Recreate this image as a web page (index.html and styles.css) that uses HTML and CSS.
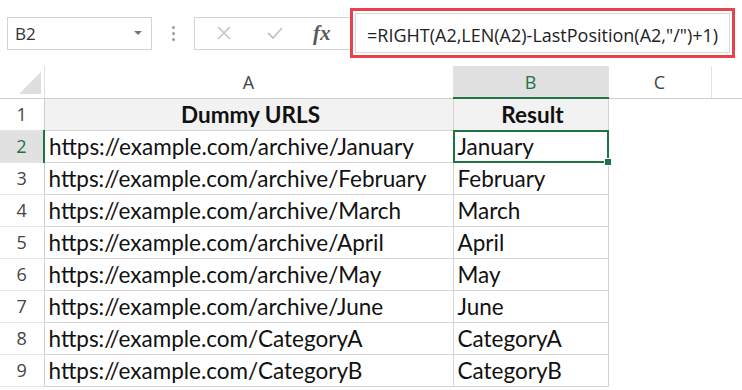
FILE: index.html
```html
<!DOCTYPE html>
<html lang="en">

<head>
    <meta charset="UTF-8">
    <meta name="viewport" content="width=device-width, initial-scale=1.0">
    <title>LastPosition formula</title>
    <link rel="stylesheet" href="styles.css">
</head>

<body>

    <div class="formula-bar">
        <div class="name-box">
            <span>B2</span>
            <span class="caret"></span>
        </div>
        <div class="grip"><i></i><i></i><i></i></div>
        <div class="fx-box">
            <svg class="icon" width="16" height="16" viewBox="0 0 16 16">
                <path d="M2 2 L14 14 M14 2 L2 14" stroke="#c4c4c4" stroke-width="1.6" fill="none" />
            </svg>
            <svg class="icon" width="18" height="16" viewBox="0 0 18 16">
                <path d="M2 8 L7 13 L16 3" stroke="#c4c4c4" stroke-width="1.8" fill="none" />
            </svg>
            <span class="fx">fx</span>
        </div>
        <div class="highlight">
            <div class="formula">=RIGHT(A2,LEN(A2)-LastPosition(A2,"/")+1)</div>
        </div>
    </div>

    <table class="sheet">
        <colgroup>
            <col class="col-head">
            <col class="col-a">
            <col class="col-b">
            <col class="col-c">
            <col>
        </colgroup>
        <tr class="letters">
            <th class="corner"><span class="tri"></span></th>
            <th>A</th>
            <th class="sel">B</th>
            <th>C</th>
            <th class="rest"></th>
        </tr>
        <tr class="title-row">
            <th class="num">1</th>
            <td class="cell title">Dummy URLS</td>
            <td class="cell title">Result</td>
            <td></td><td></td>
        </tr>
        <tr>
            <th class="num sel">2</th>
            <td class="cell">https://example.com/archive/January</td>
            <td class="cell active">January</td>
            <td></td><td></td>
        </tr>
        <tr>
            <th class="num">3</th>
            <td class="cell">https://example.com/archive/February</td>
            <td class="cell">February</td>
            <td></td><td></td>
        </tr>
        <tr>
            <th class="num">4</th>
            <td class="cell">https://example.com/archive/March</td>
            <td class="cell">March</td>
            <td></td><td></td>
        </tr>
        <tr>
            <th class="num">5</th>
            <td class="cell">https://example.com/archive/April</td>
            <td class="cell">April</td>
            <td></td><td></td>
        </tr>
        <tr>
            <th class="num">6</th>
            <td class="cell">https://example.com/archive/May</td>
            <td class="cell">May</td>
            <td></td><td></td>
        </tr>
        <tr>
            <th class="num">7</th>
            <td class="cell">https://example.com/archive/June</td>
            <td class="cell">June</td>
            <td></td><td></td>
        </tr>
        <tr>
            <th class="num">8</th>
            <td class="cell">https://example.com/CategoryA</td>
            <td class="cell">CategoryA</td>
            <td></td><td></td>
        </tr>
        <tr>
            <th class="num">9</th>
            <td class="cell">https://example.com/CategoryB</td>
            <td class="cell">CategoryB</td>
            <td></td><td></td>
        </tr>
    </table>

</body>

</html>
```

FILE: styles.css
```css
body {
    margin: 0;
    background-color: #fff;
    font-family: "Open Sans", sans-serif;
    color: #222;
    overflow: hidden;
}

/* formula bar */
.formula-bar {
    display: flex;
    align-items: center;
    height: 66px;
    padding-left: 7px;
}

.name-box {
    box-sizing: border-box;
    width: 145px;
    height: 33px;
    border: 1px solid #d4d4d4;
    display: flex;
    align-items: center;
    justify-content: space-between;
    padding: 0 9px 0 7px;
    font-size: 17px;
    color: #333;
}

.caret {
    width: 0;
    height: 0;
    border-left: 4px solid transparent;
    border-right: 4px solid transparent;
    border-top: 4px solid #777;
}

.grip {
    width: 42px;
    display: flex;
    flex-direction: column;
    align-items: center;
    gap: 3px;
}

.grip i {
    width: 3px;
    height: 3px;
    background-color: #9a9a9a;
    border-radius: 50%;
}

.fx-box {
    box-sizing: border-box;
    width: 156px;
    height: 33px;
    border: 1px solid #d4d4d4;
    border-right: none;
    display: flex;
    align-items: center;
    padding-left: 21px;
    gap: 34px;
}

.fx {
    font-family: "Liberation Serif", serif;
    font-style: italic;
    font-weight: bold;
    font-size: 21px;
    color: #5a5a5a;
    margin-left: -5px;
}

.highlight {
    box-sizing: border-box;
    width: 385px;
    height: 50px;
    border: 3px solid #e8434b;
    padding: 2px;
}

.formula {
    box-sizing: border-box;
    height: 100%;
    border: 1px solid #d8d8d8;
    padding-left: 11px;
    line-height: 42px;
    font-size: 18px;
    color: #222;
    white-space: nowrap;
}

/* grid */
.sheet {
    border-collapse: collapse;
    table-layout: fixed;
    width: 742px;
    font-family: "Lato", sans-serif;
}

.col-head { width: 44px; }
.col-a { width: 409px; }
.col-b { width: 155px; }
.col-c { width: 103px; }

.sheet tr {
    height: 32px;
}

.letters th {
    font-weight: normal;
    font-family: "Open Sans", sans-serif;
    font-size: 18px;
    color: #444;
    border-bottom: 1px solid #cfcfcf;
    border-right: 1px solid #e2e2e2;
    padding: 0;
}

.letters th.sel {
    background-color: #e1e1e1;
    color: #217346;
    border-bottom: 2px solid #217346;
}

.letters th.rest {
    border-right: none;
}

.corner {
    position: relative;
    border-right: 1px solid #cfcfcf;
}

.tri {
    position: absolute;
    right: 3px;
    bottom: 4px;
    width: 0;
    height: 0;
    border-left: 22px solid transparent;
    border-bottom: 22px solid #dedede;
}

.num {
    font-weight: normal;
    font-family: "Open Sans", sans-serif;
    font-size: 18px;
    color: #444;
    border-right: 1px solid #cfcfcf;
    border-bottom: 1px solid #e6e6e6;
    padding: 0;
}

.num.sel {
    background-color: #e1e1e1;
    color: #217346;
    border-right: 2px solid #217346;
}

.cell {
    border: 1px solid #d4d4d4;
    padding: 0 0 0 4px;
    font-size: 22.5px;
    color: #111;
    white-space: nowrap;
    overflow: hidden;
}

.title {
    background-color: #f2f2f2;
    font-weight: bold;
    text-align: center;
}

.active {
    position: relative;
    overflow: visible;
}

.active::after {
    content: "";
    position: absolute;
    left: -1px;
    top: -1px;
    right: -1px;
    bottom: -1px;
    border: 2px solid #217346;
}

.active::before {
    content: "";
    position: absolute;
    right: -4px;
    bottom: -4px;
    width: 6px;
    height: 6px;
    background-color: #217346;
    border: 1px solid #fff;
    z-index: 1;
}
```
